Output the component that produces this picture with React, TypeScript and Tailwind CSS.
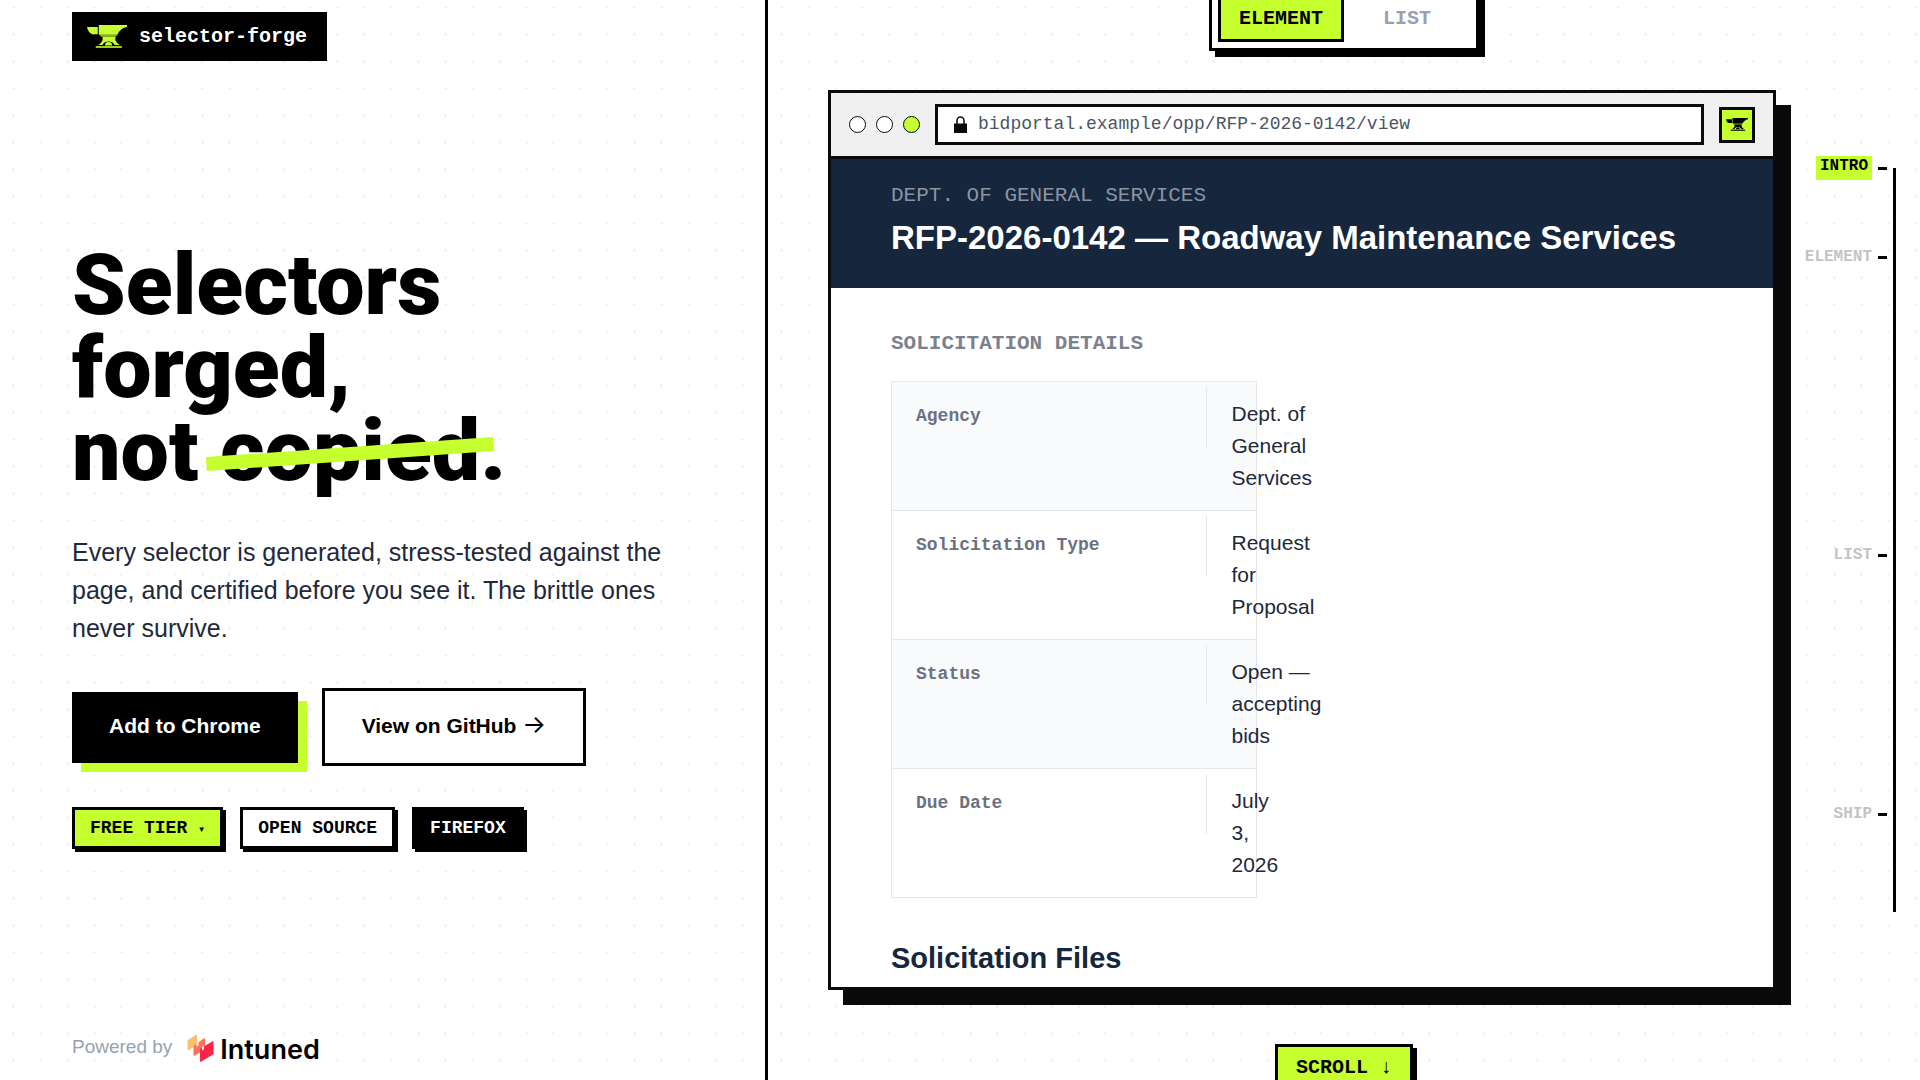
const MONO = "font-['Liberation_Mono',monospace]";
const DOTS =
  "bg-[radial-gradient(#f0f0f0_1px,transparent_1.5px)] bg-size-[27px_27px] bg-position-[0_-6px]";

const DETAILS = [
  { label: "Agency", lines: ["Dept. of", "General", "Services"] },
  { label: "Solicitation Type", lines: ["Request", "for", "Proposal"] },
  { label: "Status", lines: ["Open —", "accepting", "bids"] },
  { label: "Due Date", lines: ["July", "3,", "2026"] },
];

const SECTIONS = [
  { id: "intro", label: "INTRO", grow: "grow-89", active: true },
  { id: "element", label: "ELEMENT", grow: "grow-298", active: false },
  { id: "list", label: "LIST", grow: "grow-259", active: false },
  { id: "ship", label: "SHIP", grow: "grow-98", active: false },
];

function Anvil({ className }: { className?: string }) {
  return (
    <svg viewBox="0 0 39 23" className={className} fill="currentColor" aria-hidden="true">
      <path d="M0 2h10.500v7H5C2 8 .5 5 0 2z" />
      <path d="M11.500 0H39v2c-4 .5-7 3-9.500 7.500h-18z" />
      <path d="M12 9.500h17.500L28 11.500H14z" opacity="0.7" />
      <path d="M15 11.500h13c-1 3 0 5.500 4 8h-5c-2-4.500-10-4.500-12 0h-4c3.500-2 5-5 4-8z" />
      <path d="M17.500 20a3.500 3.500 0 0 1 7 0z" />
      <path d="M8.500 20.500H34V23H8.500z" opacity="0.8" />
    </svg>
  );
}

function IntunedMark() {
  return (
    <svg viewBox="0 0 27 28" className="h-7 w-[27px]" strokeWidth="1" strokeLinejoin="round" aria-hidden="true">
      <path d="M1 6.500 9.500 1v9.500L1 16z" fill="#fbbf6b" stroke="#fbbf6b" />
      <path d="M7 12 17.500 4.500V15L7 21.500z" fill="#ff7058" stroke="#ff7058" />
      <path d="M13.500 15 26 7.500V20l-12.500 7.500z" fill="#ff2447" stroke="#ff2447" />
      <path d="M9.500 9l2-1v3.500l-2 1zM15 13l2-1.500V15l-2 1.500z" fill="#fff" stroke="none" />
    </svg>
  );
}

function LockIcon() {
  return (
    <svg viewBox="0 0 13 17" className="h-[17px] w-[13px]" aria-hidden="true">
      <path d="M3 8V4.500a3.500 3.500 0 0 1 7 0V8" fill="none" stroke="#111" strokeWidth="1.600" />
      <path d="M0 7.500h13V17H0z" fill="#0a0a0a" />
    </svg>
  );
}

function Hero() {
  return (
    <section
      className={`${DOTS} flex w-2/5 shrink-0 flex-col items-start justify-between border-r-3 border-black px-18 pt-3 pb-4`}
    >
      <a href="#intro" className="flex h-[49px] items-center gap-3 bg-black pr-5 pl-[15px] text-white">
        <Anvil className="w-10 text-[#c6ff2e]" />
        <span className={`${MONO} text-xl font-bold`}>selector-forge</span>
      </a>

      <div className="flex flex-col items-start gap-[41px]">
        <h1 className="font-['Roboto',sans-serif] text-[86px] leading-[83px] font-black text-black">
          Selectors
          <br />
          forged,
          <br />
          not{" "}
          <span className="relative">
            copied
            <span className="absolute -inset-x-3.5 top-[47%] h-3.5 -rotate-4 bg-[#c6ff2e]" />
          </span>
          .
        </h1>
        <p className="max-w-[612px] text-[25px] leading-[38px] text-gray-800">
          Every selector is generated, stress-tested against the page, and certified before you see it. The brittle
          ones never survive.
        </p>
        <div className="flex items-center gap-6 text-[21px] leading-[31px] font-bold">
          <a href="#chrome" className="bg-black px-[37px] pt-[18px] pb-[22px] text-white shadow-[9px_9px_0_#c6ff2e]">
            Add to Chrome
          </a>
          <a href="#github" className="border-3 border-black bg-white px-[37px] pt-[18px] pb-[22px] text-black">
            View on GitHub <span className="font-['Inter',sans-serif] text-[25px] font-normal">→</span>
          </a>
        </div>
        <div className={`${MONO} flex gap-[17px] text-lg font-bold`}>
          <button className="h-[42px] border-3 border-black bg-[#c6ff2e] px-[15px] shadow-[3px_3px_0_#000]">
            FREE TIER <span className="text-xs">▾</span>
          </button>
          <span className="flex h-[42px] items-center border-3 border-black bg-white px-[15px] shadow-[3px_3px_0_#000]">
            OPEN SOURCE
          </span>
          <span className="flex h-[42px] items-center border-3 border-black bg-black px-[15px] text-white shadow-[3px_3px_0_#000]">
            FIREFOX
          </span>
        </div>
      </div>

      <a href="#intuned" className="flex h-[33px] items-center gap-[15px] text-[19px] text-gray-400">
        Powered by
        <span className="flex items-center gap-1.5 font-['Inter',sans-serif] text-[27px] leading-7 font-semibold text-black">
          <IntunedMark />
          <span className="pt-1">Intuned</span>
        </span>
      </a>
    </section>
  );
}

function DetailsTable() {
  return (
    <table className="w-[366px] table-fixed border-collapse border border-gray-200 text-left">
      <tbody>
        {DETAILS.map((row) => (
          <tr key={row.label} className="h-[129px] border-b border-gray-200 align-top odd:bg-[#f9fafc]">
            <th scope="row" className="w-[315px] pt-[5px]">
              <div
                className={`${MONO} flex h-[60px] items-center border-r border-gray-200 pb-0.5 pl-6 text-lg text-gray-500`}
              >
                {row.label}
              </div>
            </th>
            <td className="pt-4 pl-[25px] text-[21px] leading-8 whitespace-nowrap text-gray-800">
              {row.lines.map((line) => (
                <div key={line}>{line}</div>
              ))}
            </td>
          </tr>
        ))}
      </tbody>
    </table>
  );
}

function BrowserWindow() {
  return (
    <article className="flex h-[900px] shrink-0 flex-col self-stretch overflow-hidden border-3 border-[#0a0a0a] bg-white shadow-[15px_15px_0_#0a0a0a]">
      <div className="flex shrink-0 items-center gap-[15px] border-b-3 border-[#0a0a0a] bg-[#f0f0f0] px-[18px] py-[11px]">
        <div className="flex gap-2.5">
          <span className="size-[17px] rounded-full border border-[#0a0a0a] bg-white" />
          <span className="size-[17px] rounded-full border border-[#0a0a0a] bg-white" />
          <span className="size-[17px] rounded-full border border-[#0a0a0a] bg-[#c6ff2e]" />
        </div>
        <div className="flex h-[41px] flex-1 items-center gap-[11px] border-3 border-[#0a0a0a] bg-white px-4">
          <LockIcon />
          <span className={`${MONO} pb-0.5 text-lg leading-6 text-gray-600`}>
            bidportal.example/opp/RFP-2026-0142/view
          </span>
        </div>
        <button
          aria-label="selector-forge"
          className="flex size-9 items-center justify-center border-3 border-[#0a0a0a] bg-[#c6ff2e]"
        >
          <Anvil className="w-[22px]" />
        </button>
      </div>

      <header className="flex h-[129px] shrink-0 flex-col bg-[#16263c] px-[60px] pt-[23px]">
        <p className={`${MONO} text-[21px] leading-7 text-[#8a94a3]`}>DEPT. OF GENERAL SERVICES</p>
        <h2 className="pt-2 text-[33px] leading-10 font-bold text-white">
          RFP-2026-0142 — Roadway Maintenance Services
        </h2>
      </header>

      <div className="px-[60px] pt-[42px]">
        <h3 className={`${MONO} pb-[23px] text-[21px] leading-7 font-bold text-[#7b828d]`}>SOLICITATION DETAILS</h3>
        <DetailsTable />
        <h3 className="pt-10 text-[29px] leading-10 font-bold text-[#16263c]">Solicitation Files</h3>
      </div>
    </article>
  );
}

function SectionRail() {
  return (
    <nav
      aria-label="Sections"
      className={`${MONO} absolute top-[168px] right-6 bottom-[168px] border-r-3 border-black pr-1.5 text-base font-bold`}
    >
      <ul className="flex h-full flex-col items-stretch">
        {SECTIONS.map((section) => (
          <li key={section.id} className={`${section.grow} basis-0`}>
            <a href={`#${section.id}`} className="-mt-3 flex h-6 items-center justify-end gap-1.5">
              <span
                className={
                  section.active ? "h-6 bg-[#c6ff2e] px-1 leading-5 text-black" : "h-6 leading-6 text-[#c4c4c4]"
                }
              >
                {section.label}
              </span>
              <span className="h-[3px] w-[9px] bg-black" />
            </a>
          </li>
        ))}
      </ul>
    </nav>
  );
}

export default function App() {
  return (
    <main className="flex h-screen overflow-hidden bg-white font-['Liberation_Sans',sans-serif]">
      <Hero />
      <section className={`${DOTS} relative flex flex-1 flex-col items-center justify-center`}>
        <div
          className={`${MONO} flex shrink-0 border-3 border-black bg-white p-1.5 text-xl leading-none font-bold shadow-[6px_6px_0_#000]`}
        >
          <button className="h-[45px] border-3 border-black bg-[#c6ff2e] px-[18px] pb-0.5">ELEMENT</button>
          <button className="h-[45px] border-3 border-transparent px-9 pb-0.5 text-gray-400">LIST</button>
        </div>
        <div className="flex flex-col self-stretch pt-[39px] pr-36 pb-[54px] pl-[60px]">
          <BrowserWindow />
        </div>
        <button
          className={`${MONO} h-12 shrink-0 border-3 border-black bg-[#c6ff2e] px-[18px] text-xl leading-none font-bold shadow-[4px_4px_0_#000]`}
        >
          SCROLL ↓
        </button>
        <SectionRail />
      </section>
    </main>
  );
}
